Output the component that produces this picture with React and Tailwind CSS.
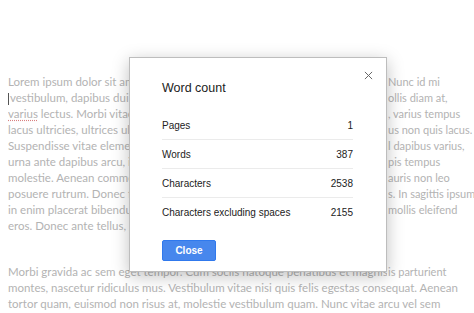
const lines = [
  { left: 'Lorem ipsum dolor sit amet, consectetur adipiscing elit. Integer nec odio.', right: 'Nunc id mi' },
  { left: 'vestibulum, dapibus dui quis, sodales libero. Donec mollis diam at,', right: 'ollis diam at,', cursor: true },
  { left: 'varius lectus. Morbi vitae turpis sit amet ligula, varius tempus', right: ', varius tempus', spell: true },
  { left: 'lacus ultricies, ultrices ullamcorper nisl. Etiam tempus non quis lacus.', right: 'us non quis lacus.' },
  { left: 'Suspendisse vitae elementum sapien, sed blandit id dapibus varius,', right: 'l dapibus varius,' },
  { left: 'urna ante dapibus arcu, in vehicula turpis tempus', right: 'pis tempus' },
  { left: 'molestie. Aenean commodo sapien at mauris non leo', right: 'auris non leo' },
  { left: 'posuere rutrum. Donec faucibus tincidunt lectus. In sagittis ipsum', right: 's. In sagittis ipsum' },
  { left: 'in enim placerat bibendum, a tempor nunc mollis eleifend', right: 'mollis eleifend' },
  { left: 'eros. Donec ante tellus, gravida vel lacus sit amet.', right: '' },
];

const rows = [
  ['Pages', '1'],
  ['Words', '387'],
  ['Characters', '2538'],
  ['Characters excluding spaces', '2155'],
];

function Line({ line }) {
  return (
    <div className="flex h-4 items-center whitespace-nowrap">
      <div className="w-[379px] shrink-0 overflow-hidden">
        {line.cursor && <span className="inline-block w-px h-[12px] bg-[#555] align-middle mr-px" />}
        {line.spell ? (
          <>
            <span className="underline decoration-dotted decoration-[#d98080] underline-offset-2">varius</span>
            {line.left.slice(6)}
          </>
        ) : (
          line.left
        )}
      </div>
      <div className="pl-px text-[11px]">{line.right}</div>
    </div>
  );
}

export default function App() {
  return (
    <div className="relative w-[474px] h-[313px] overflow-hidden bg-white">
      {/* document text */}
      <div className="pt-[74px] pl-2 text-[11.5px] text-[#b3b3b3] font-['Lato',sans-serif]">
        {lines.map((l, i) => (
          <Line key={i} line={l} />
        ))}
        <div className="mt-[30px] whitespace-nowrap">
          <div className="h-4 flex items-center">
            <div className="w-[379px] shrink-0 overflow-hidden">Morbi gravida ac sem eget tempor. Cum sociis natoque penatibus et magnis</div>
            <div className="pl-px text-[11px]">is parturient</div>
          </div>
          <div className="h-4 flex items-center">montes, nascetur ridiculus mus. Vestibulum vitae nisi quis felis egestas consequat. Aenean</div>
          <div className="h-4 flex items-center">tortor quam, euismod non risus at, molestie vestibulum quam. Nunc vitae arcu vel sem</div>
        </div>
      </div>

      {/* word count dialog */}
      <div className="absolute left-[129px] top-[57px] w-[258px] h-[215px] bg-white border border-[#bdbdbd] shadow-[0_4px_16px_rgba(0,0,0,0.25)] pl-[32px] pr-[33px] pt-[22px] font-['Liberation_Sans',Arial,sans-serif] text-[#222]">
        <button className="absolute right-[12px] top-[11px] w-3 h-3 flex items-center justify-center text-[#666]">
          <svg viewBox="0 0 10 10" className="w-[9px] h-[9px]" fill="none" stroke="currentColor" strokeWidth="1.1">
            <path d="M1 1l8 8M9 1l-8 8" />
          </svg>
        </button>
        <div className="text-[12.5px] leading-4">Word count</div>
        <div className="mt-[15px]">
          {rows.map(([label, value], i) => (
            <div
              key={label}
              className={`flex items-center justify-between h-[29px] text-[10px] ${i < rows.length - 1 ? 'border-b border-[#ebebeb]' : ''}`}
            >
              <span>{label}</span>
              <span>{value}</span>
            </div>
          ))}
        </div>
        <button className="mt-[13px] w-[54px] h-[21px] rounded-[2px] bg-[#4787ed] border border-[#3079ed] text-white text-[10px] font-bold">
          Close
        </button>
      </div>
    </div>
  );
}
